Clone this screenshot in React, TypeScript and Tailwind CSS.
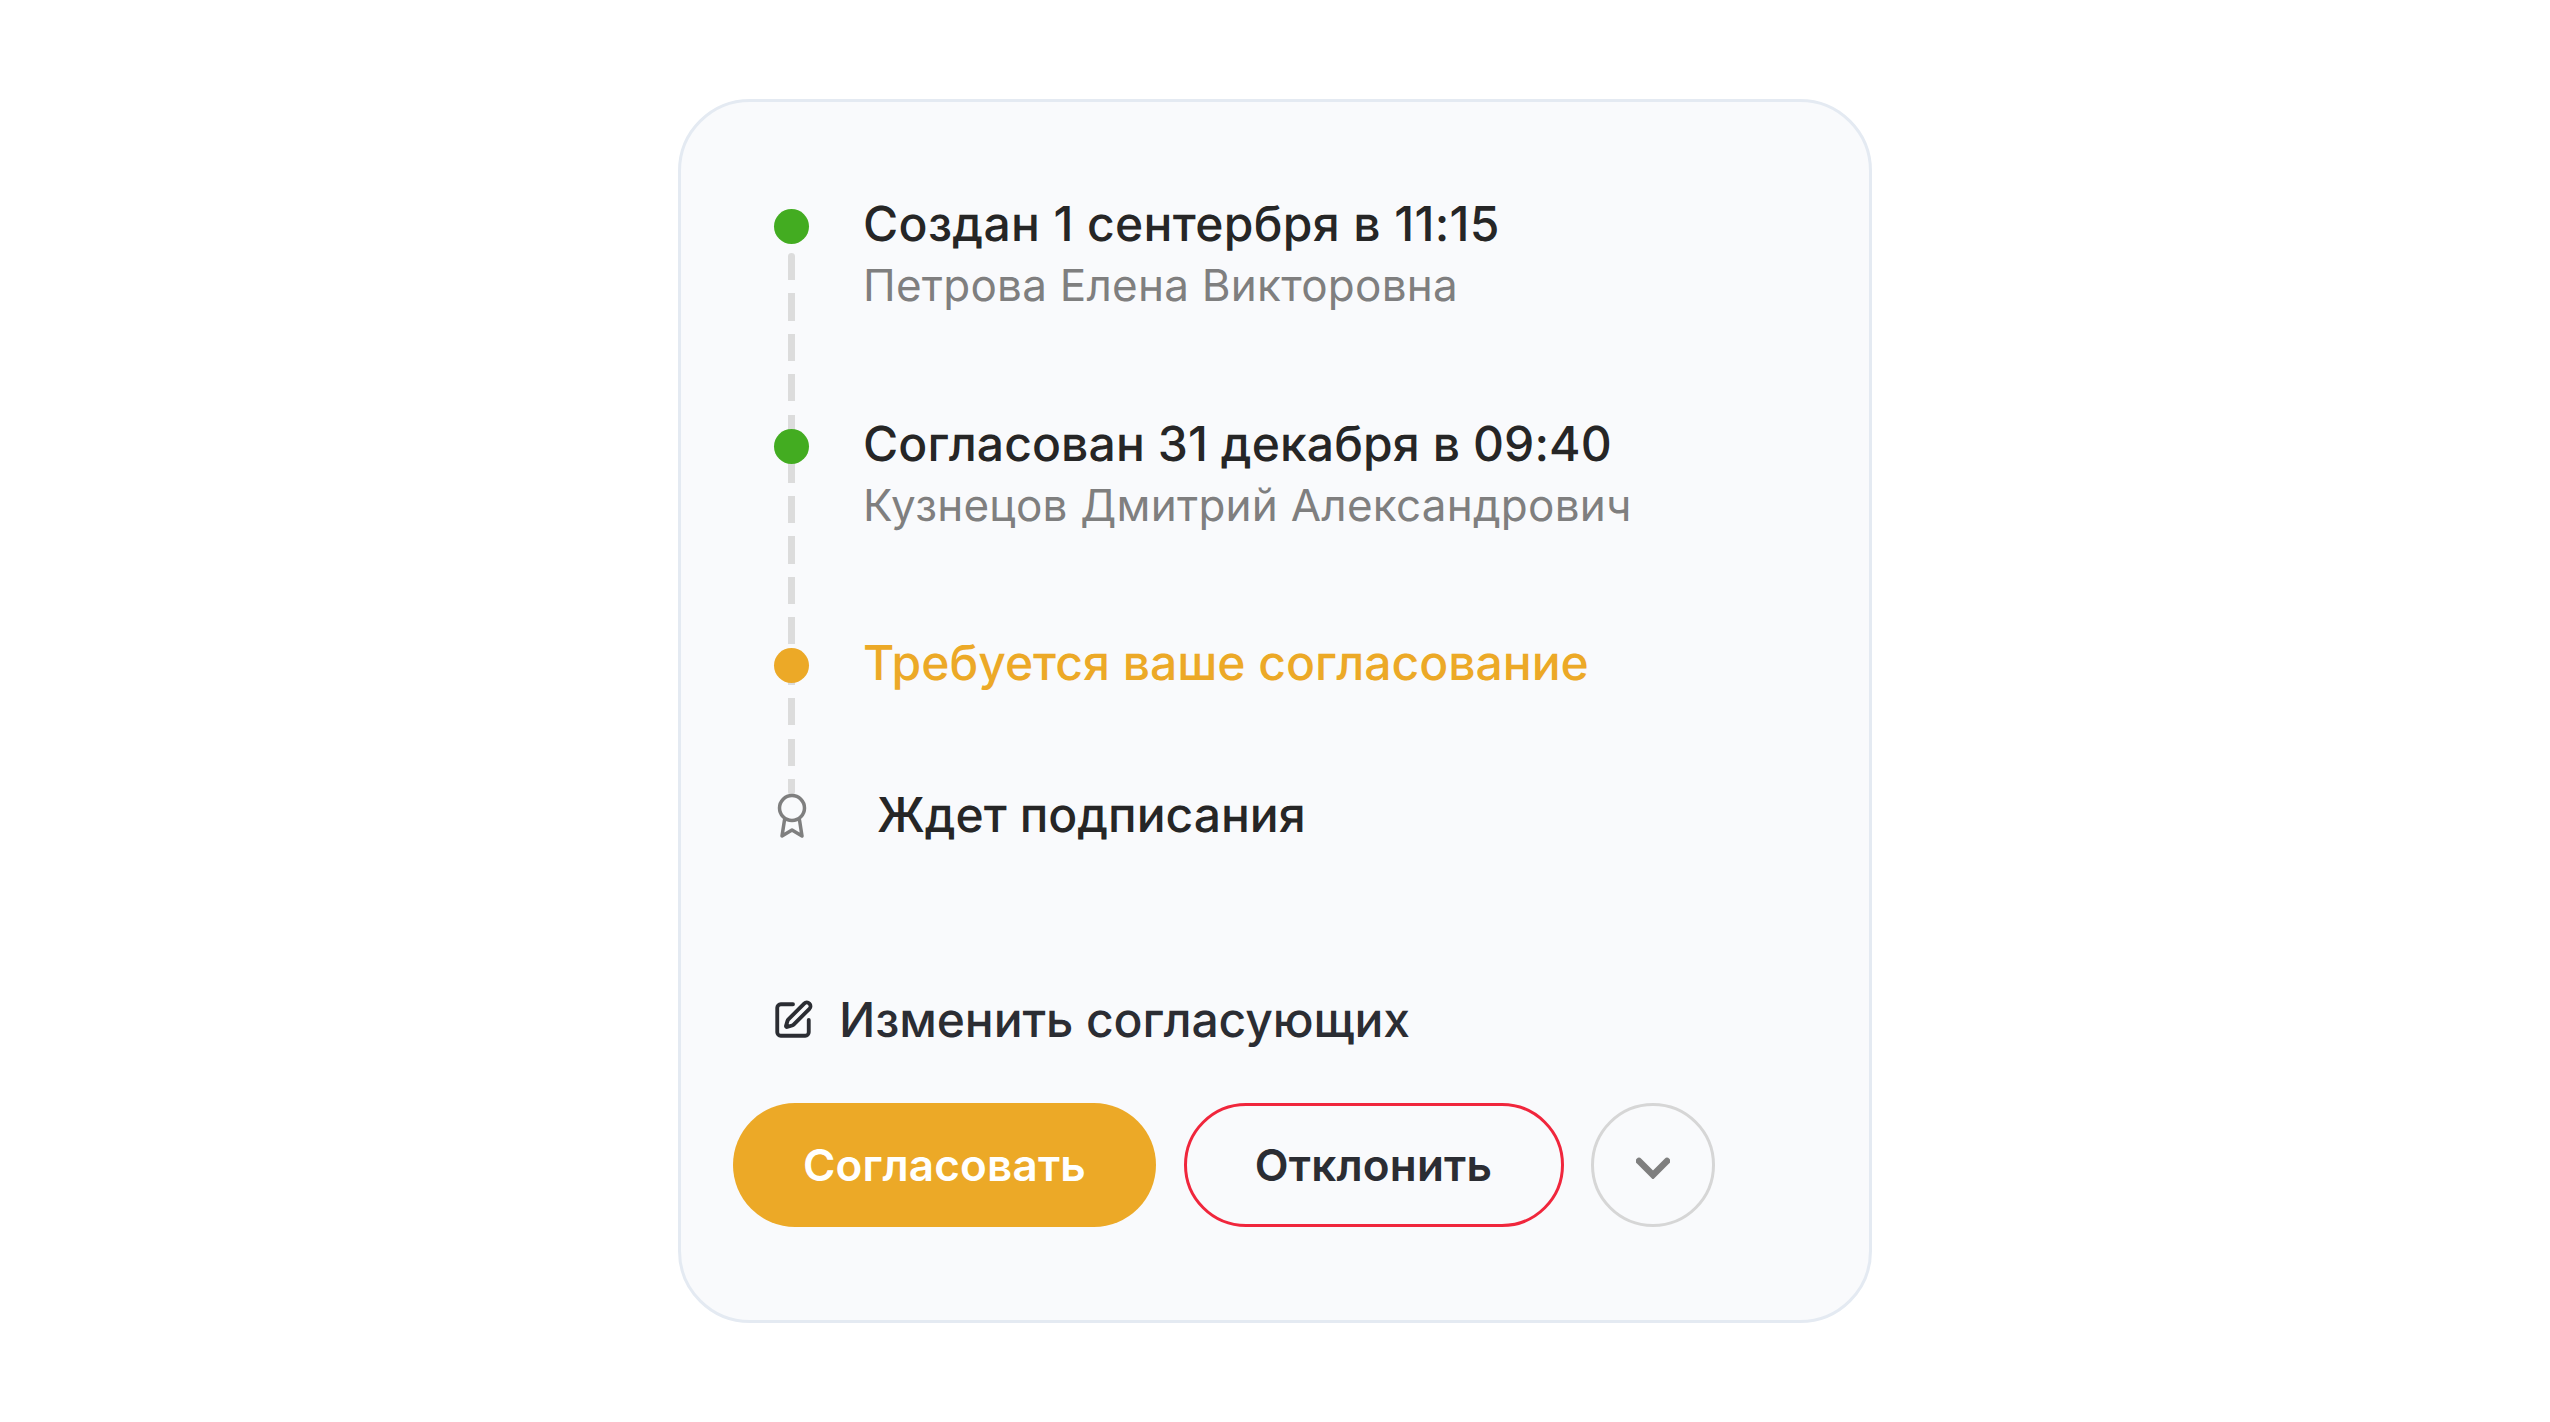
import { PenSquare } from "lucide-react";

const steps = [
  { title: "Создан 1 сентербря в 11:15", person: "Петрова Елена Викторовна", dot: "bg-[#43ac21]", titleColor: "text-[#262626] tracking-[0.35px]" },
  { title: "Согласован 31 декабря в 09:40", person: "Кузнецов Дмитрий Александрович", dot: "bg-[#43ac21]", titleColor: "text-[#262626] tracking-[0.1px]" },
  { title: "Требуется ваше согласование", person: "", dot: "bg-[#eca927]", titleColor: "text-[#eca927]" },
];

function Ribbon() {
  return (
    <svg width="32" height="46" viewBox="0 0 32 46" fill="none" stroke="#7f7f7f" strokeWidth="3.5" strokeLinecap="round" strokeLinejoin="round">
      <circle cx="16" cy="15" r="12.5" />
      <path d="M8.5 27 L6 43 L16 37 L26 43 L23.5 27" />
    </svg>
  );
}

export default function App() {
  return (
    <div className="flex min-h-[1422px] items-start justify-center bg-white pt-[99px] font-['Inter',sans-serif] [text-rendering:geometricPrecision]">
      <div className="flex h-[1224px] w-[1194px] flex-col rounded-[72px] border-[3px] border-[#e4eaf2] bg-[#f9fafc] pl-[52px]">
        <div className="relative ml-[41px] mt-[92px]">
          {/* dashed connector, starts below the first dot */}
          <div className="absolute left-[14px] top-[59px] h-[542px] w-[7px] rounded-full bg-[repeating-linear-gradient(to_bottom,#dcdcdc_0,#dcdcdc_27px,transparent_27px,transparent_40.5px)]" />
          {steps.map((s) => (
            <div key={s.title} className={s.person ? "relative flex h-[219.5px] items-start" : "relative flex h-[152px] items-start"}>
              <div className={`mt-[15px] size-[35px] shrink-0 rounded-full ${s.dot}`} />
              <div className="ml-[54px]">
                <div className={`text-[48px] font-[450] leading-[60px] ${s.titleColor}`}>{s.title}</div>
                {s.person && <div className="text-[44px] leading-[62px] tracking-[0.25px] text-[#7f7f7f]">{s.person}</div>}
              </div>
            </div>
          ))}
          <div className="relative flex h-[60px] items-center">
            <div className="ml-[2px] mt-[2px] w-[32px] shrink-0"><Ribbon /></div>
            <div className="ml-[69px] text-[48px] font-[450] leading-[60px] text-[#262626]">Ждет подписания</div>
          </div>
        </div>
        <div className="ml-[39px] mt-[145px] flex items-center text-[#2b2d33]">
          <PenSquare size={42} strokeWidth={2.2} />
          <span className="ml-[25px] text-[48px] font-[450] leading-[60px] tracking-[-0.1px]">Изменить согласующих</span>
        </div>
        <div className="mt-[53px] flex items-center gap-[27.5px]">
          <button className="h-[124px] w-[423px] rounded-full bg-[#eca927] text-[44px] font-semibold tracking-[0.2px] text-white">Согласовать</button>
          <button className="h-[124px] w-[380px] rounded-full border-[3px] border-[#f0263c] text-[44px] font-semibold tracking-[0.2px] text-[#2b2d33]">Отклонить</button>
          <button className="flex size-[124px] items-center justify-center rounded-full border-[3px] border-[#d6d6d6]">
            <svg className="mt-[6px]" width="34" height="22" viewBox="0 0 34 22" fill="none" stroke="#7f7f7f" strokeWidth="6.5" strokeLinecap="round" strokeLinejoin="miter"><path d="M3 4 L17 18 L31 4" /></svg>
          </button>
        </div>
      </div>
    </div>
  );
}
